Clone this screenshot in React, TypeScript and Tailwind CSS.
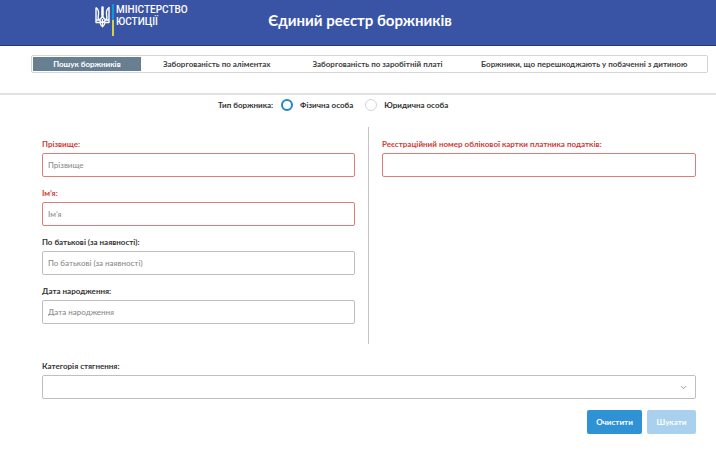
import { useState } from "react";
import { ChevronDown } from "lucide-react";

const tabs = [
    "Пошук боржників",
    "Заборгованість по аліментах",
    "Заборгованість по заробітній платі",
    "Боржники, що перешкоджають у побаченні з дитиною",
];

const personTypes = [
    { value: "person", label: "Фізична особа" },
    { value: "company", label: "Юридична особа" },
];

const personFields = [
    { id: "lastName", label: "Прізвище", required: true },
    { id: "firstName", label: "Ім’я", required: true },
    { id: "patronymic", label: "По батькові (за наявності)", required: false },
    { id: "birthDate", label: "Дата народження", required: false },
];

type FieldProps = {
    id: string;
    label: string;
    placeholder?: string;
    required?: boolean;
};

const Field = ({ id, label, placeholder, required }: FieldProps) => (
    <div>
        <label htmlFor={id} className={`block h-[15px] text-[8px] leading-3 font-bold ${required ? "text-[#cf3a36]" : "text-[#333333]"}`}>
            {label}:
        </label>
        <input
            id={id}
            type="text"
            placeholder={placeholder}
            className={`block h-6 w-full rounded-xs border bg-white px-[5px] text-[8px] font-medium outline-none placeholder:text-[#8c8c8c] ${required ? "border-[#dc7f7a]" : "border-[#bfbfbf]"}`}
        />
    </div>
);

const Logo = () => (
    <a href="#" className="flex items-start text-white">
        <svg viewBox="0 0 30 44" className="mt-0.5 mr-0.5 h-[22px] w-[15px]" fill="none" stroke="currentColor" strokeWidth="2.8" strokeLinejoin="round">
            <path d="M2 3v30h8c.6 4 2.500 6.500 5 8.500 2.500-2 4.400-4.500 5-8.500h8V3c-4 3-5.600 8-5 13l.8 7c.2 2.500-1 4-3 4M2 3c4 3 5.600 8 5 13l-.8 7c-.2 2.500 1 4 3 4" />
            <path d="M15 3v14" strokeWidth="5" strokeLinecap="round" />
            <path d="M15 16c0 6-2 9-5.500 11 .2 4 2.500 6 5.500 6s5.300-2 5.500-6C17 25 15 22 15 16zM15 26v14M2 28h8M20 28h8" />
        </svg>
        <span className="mr-0.5 flex h-8 w-0.5 flex-col">
            <span className="flex-1 bg-[#1295dd]" />
            <span className="flex-1 bg-[#d6cf4b]" />
        </span>
        <span className="font-[Roboto,sans-serif] text-[10px] leading-3 font-medium">
            МІНІСТЕРСТВО
            <br />
            ЮСТИЦІЇ
        </span>
    </a>
);

export default function App() {
    const [activeTab, setActiveTab] = useState(0);
    const [personType, setPersonType] = useState("person");

    return (
        <div className="min-h-screen bg-white font-[Lato,sans-serif] text-[#333333]">
            <header className="grid h-[46px] grid-cols-[1fr_auto_1fr] border-b border-[#26377f] bg-[#3954a5] pl-1">
                <div className="pt-1 pl-[91px]">
                    <Logo />
                </div>
                <h1 className="pt-2 text-[15px] leading-6 font-bold text-white">Єдиний реєстр боржників</h1>
            </header>

            <nav className="mt-[9px] mr-2 ml-[31px] grid h-[18px] grid-cols-[108fr_152fr_170fr_244fr] rounded-xs border border-[#d4d4d4] p-px">
                {tabs.map((tab, i) => (
                    <button
                        key={tab}
                        type="button"
                        onClick={() => setActiveTab(i)}
                        className={`text-[8px] leading-3 font-bold whitespace-nowrap ${i === activeTab ? "bg-[#687f92] text-white" : "text-[#404040]"}`}
                    >
                        {tab}
                    </button>
                ))}
            </nav>

            <form className="mt-5 border-t-2 border-[#e2e2e2]" onSubmit={(e) => e.preventDefault()}>
                <fieldset className="flex items-center pt-1 pl-[218px] text-[8px] leading-3 font-bold">
                    <legend className="float-left mr-2">Тип боржника:</legend>
                    {personTypes.map((type) => (
                        <label key={type.value} className="mr-3 flex items-center gap-[7px]">
                            <input
                                type="radio"
                                name="personType"
                                value={type.value}
                                checked={personType === type.value}
                                onChange={() => setPersonType(type.value)}
                                className="size-3 appearance-none rounded-full border border-[#d4d4d4] bg-white checked:border-2 checked:border-[#2185c9]"
                            />
                            {type.label}
                        </label>
                    ))}
                </fieldset>

                <div className="mt-4 mr-5 ml-[42px]">
                    <div className="grid h-[217px] grid-cols-2">
                        <div className="flex flex-col gap-2.5 border-r border-[#c4c4c4] pt-[11px] pr-[13px]">
                            {personFields.map((field) => (
                                <Field key={field.id} id={field.id} label={field.label} placeholder={field.label} required={field.required} />
                            ))}
                        </div>
                        <div className="pt-[11px] pl-[13px]">
                            <Field id="taxNumber" label="Реєстраційний номер облікової картки платника податків" required />
                        </div>
                    </div>

                    <div className="pt-4">
                        <label htmlFor="category" className="block h-[15px] text-[8px] leading-3 font-bold">
                            Категорія стягнення:
                        </label>
                        <div className="relative">
                            <select id="category" className="block h-6 w-full appearance-none rounded-xs border border-[#bfbfbf] bg-white px-[5px] text-[8px] outline-none">
                                <option value=""></option>
                            </select>
                            <ChevronDown size={9} className="pointer-events-none absolute top-2 right-2 text-[#777777]" />
                        </div>
                    </div>

                    <div className="mt-[11px] flex justify-end gap-[5px] text-[8px] font-bold text-white">
                        <button type="reset" className="h-6 w-[55px] rounded-xs bg-[#2f92d5]">Очистити</button>
                        <button type="submit" disabled className="h-6 w-[49px] rounded-xs bg-[#a9d1ee]">Шукати</button>
                    </div>
                </div>
            </form>
        </div>
    );
}
